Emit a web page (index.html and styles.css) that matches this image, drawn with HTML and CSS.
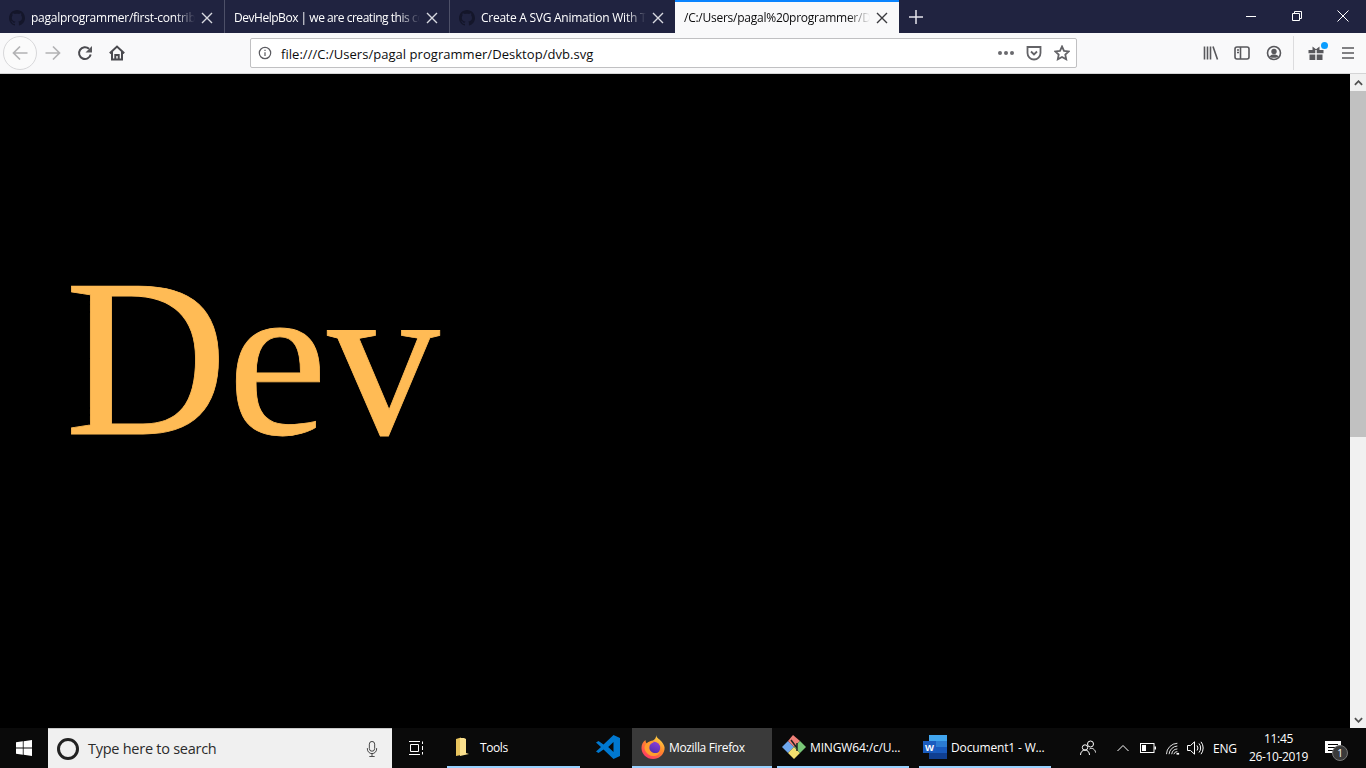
FILE: index.html
```html
<!DOCTYPE html>
<html lang="en">
<head>
<meta charset="utf-8">
<title>dvb.svg</title>
<link rel="stylesheet" href="styles.css">
</head>
<body>
<div class="browser">
  <div class="tabbar">
    <div class="tab">
      <svg class="favicon" viewBox="0 0 16 16"><path fill="#14162a" d="M8 0C3.6 0 0 3.6 0 8c0 3.5 2.3 6.5 5.500 7.600.4.100.5-.2.500-.4v-1.400c-2.200.5-2.700-1-2.700-1-.4-.9-.9-1.200-.9-1.200-.7-.5.100-.5.100-.5.800.1 1.200.8 1.200.8.700 1.200 1.900.9 2.300.7.100-.5.300-.9.500-1.100-1.800-.2-3.700-.9-3.700-4 0-.9.300-1.600.8-2.100-.1-.2-.4-1 .1-2.100 0 0 .7-.2 2.200.8.600-.2 1.300-.3 2-.3s1.400.1 2 .3c1.500-1 2.200-.8 2.200-.8.400 1.100.200 1.900.1 2.100.5.600.8 1.300.8 2.100 0 3.100-1.900 3.700-3.700 3.900.3.300.6.800.6 1.500v2.200c0 .2.100.5.500.4C13.700 14.500 16 11.500 16 8c0-4.400-3.600-8-8-8z"/></svg>
      <span class="tab-title">pagalprogrammer/first-contrib</span>
      <svg class="tab-x" viewBox="0 0 12 12"><path d="M1 1l10 10M11 1L1 11"/></svg>
    </div>
    <div class="tab no-icon">
      <span class="tab-title tight">DevHelpBox | we are creating this co</span>
      <svg class="tab-x" viewBox="0 0 12 12"><path d="M1 1l10 10M11 1L1 11"/></svg>
    </div>
    <div class="tab last">
      <svg class="favicon" viewBox="0 0 16 16"><path fill="#14162a" d="M8 0C3.6 0 0 3.6 0 8c0 3.5 2.300 6.500 5.500 7.600.4.100.5-.2.500-.4v-1.400c-2.200.5-2.700-1-2.700-1-.4-.9-.9-1.200-.9-1.200-.7-.5.100-.5.100-.5.800.1 1.200.8 1.200.8.700 1.200 1.900.9 2.300.7.100-.5.300-.9.500-1.100-1.800-.2-3.700-.9-3.700-4 0-.9.300-1.600.8-2.100-.1-.2-.4-1 .1-2.100 0 0 .7-.2 2.200.8.600-.2 1.300-.3 2-.3s1.400.1 2 .3c1.500-1 2.200-.8 2.200-.8.400 1.100.200 1.900.1 2.100.5.600.8 1.300.8 2.100 0 3.100-1.900 3.700-3.700 3.900.3.300.6.800.6 1.500v2.200c0 .2.100.5.500.4C13.700 14.500 16 11.500 16 8c0-4.400-3.600-8-8-8z"/></svg>
      <span class="tab-title">Create A SVG Animation With T</span>
      <svg class="tab-x" viewBox="0 0 12 12"><path d="M1 1l10 10M11 1L1 11"/></svg>
    </div>
    <div class="tab active no-icon">
      <span class="tab-title">/C:/Users/pagal%20programmer/De</span>
      <svg class="tab-x dark" viewBox="0 0 12 12"><path d="M1 1l10 10M11 1L1 11"/></svg>
    </div>
    <svg class="newtab" viewBox="0 0 14 14"><path d="M7 0v14M0 7h14"/></svg>
    <div class="winctl">
      <svg class="win-ic" viewBox="0 0 12 12"><path d="M1 6.500h10"/></svg>
      <svg class="win-ic" viewBox="0 0 12 12"><path d="M1.500 3.500h7v7h-7zM3.500 3.500v-2h7v7h-2"/></svg>
      <svg class="win-ic" viewBox="0 0 12 12"><path d="M.5.500l11 11M11.500.500l-11 11"/></svg>
    </div>
  </div>

  <div class="toolbar">
    <div class="backring">
      <svg class="nav-ic pale" viewBox="0 0 16 16"><path d="M15.500 8H1.500M8 1.500L1.500 8 8 14.500"/></svg>
    </div>
    <svg class="nav-ic pale fwd" viewBox="0 0 16 16"><path d="M.5 8h14M8 1.500L14.500 8 8 14.500"/></svg>
    <svg class="nav-ic reload" viewBox="0 0 16 16"><path d="M13.700 9.500A5.900 5.900 0 1 1 12 3.800"/><path class="solid" d="M15 1v6.500H8.500z"/></svg>
    <svg class="nav-ic home" viewBox="0 0 16 16"><path d="M.8 8.200L8 1.500l7.200 6.700M3 6.500V14.500h10V6.500M6.300 14.500V10h3.400v4.500"/></svg>
    <div class="urlbar">
      <svg class="info" viewBox="0 0 16 16"><circle cx="8" cy="8" r="6.500"/><path d="M8 7.200v4.300M8 4.200v1.600"/></svg>
      <span class="url">file:///C:/Users/pagal programmer/Desktop/dvb.svg</span>
      <div class="url-actions">
        <span class="dots"><i></i><i></i><i></i></span>
        <svg class="act" viewBox="0 0 16 16"><path d="M1.500 2h13v6a6.500 6.500 0 0 1-13 0zM5 6.500l3 3 3-3"/></svg>
        <svg class="act" viewBox="0 0 16 16"><path d="M8 1.500l2 4.300 4.700.6-3.400 3.200.9 4.700L8 12l-4.200 2.300.9-4.700L1.300 6.400 6 5.800z"/></svg>
      </div>
    </div>
    <div class="tools">
      <svg class="tool" viewBox="0 0 16 16"><path d="M1.500 1.500v13M4.500 1.500v13M7.500 1.500v13M10 1.500l4.500 13"/></svg>
      <svg class="tool sidebar" viewBox="0 0 16 16"><rect x="1" y="2" width="14" height="12" rx="2"/><path d="M6.500 2v12M3 5h2M3 7.500h2"/></svg>
      <svg class="tool person" viewBox="0 0 16 16"><circle cx="8" cy="8" r="6.500"/><circle class="solid" cx="8" cy="6.500" r="2.700"/><path class="solid" d="M3.500 11.500c1-1.500 2.500-2 4.500-2s3.500.5 4.500 2c-2 1.800-7 1.800-9 0z"/></svg>
      <span class="sep"></span>
      <div class="gift">
        <svg class="tool" viewBox="0 0 16 16"><path class="solid" d="M.5 5h6.800v3.200H.5zM8.700 5h6.800v3.200H8.700zM1.500 9.500h5.800V15H1.500zM8.700 9.500h5.800V15H8.700zM4.500 1.500L8 4.200l3.500-2.700V5h-7z"/></svg>
        <span class="gift-dot"></span>
      </div>
      <svg class="tool menu" viewBox="0 0 14 14"><path d="M1 2h12M1 7h12M1 12h12"/></svg>
    </div>
  </div>

  <main class="viewport">
    <div class="page">
      <div class="dev">Dev</div>
    </div>
    <div class="scrollbar">
      <svg class="sb-arrow" viewBox="0 0 10 6"><path d="M1 5l4-4 4 4"/></svg>
      <div class="sb-track"><div class="sb-thumb"></div></div>
      <svg class="sb-arrow" viewBox="0 0 10 6"><path d="M1 1l4 4 4-4"/></svg>
    </div>
  </main>

  <footer class="taskbar">
    <div class="start">
      <svg class="winlogo" viewBox="0 0 16 16"><path d="M0 2.300l6.800-1v6.300H0zM7.600 1.200L16 0v7.600H7.600zM0 8.400h6.800v6.300l-6.800-1zM7.600 8.400H16V16l-8.400-1.200z"/></svg>
    </div>
    <div class="search">
      <span class="cortana"></span>
      <span class="search-text">Type here to search</span>
      <svg class="mic" viewBox="0 0 12 18"><rect x="3" y=".5" width="6" height="11" rx="3"/><path d="M.8 8v1a5.200 5.200 0 0 0 10.400 0V8M6 14.200v3M3 17.500h6"/></svg>
    </div>
    <div class="taskview">
      <svg viewBox="0 0 16 14"><path d="M2.500 3.500h8v7h-8zM1 .5h11M1 13.500h11M14.500.5v2.500M14.500 5v4M14.500 11v2.500"/></svg>
    </div>
    <div class="app running tools-app">
      <svg class="app-ic" viewBox="0 0 16 20"><path fill="#e8c45e" d="M1 2l5-1.500V18l-5 1z"/><path fill="#fbe08d" d="M5 1h4l2 1v14l3 1-9 2z"/></svg>
      <span>Tools</span>
    </div>
    <div class="app vscode">
      <svg class="app-ic code" viewBox="0 0 24 24"><path fill="#0078d0" d="M17.500 0L24 3v18l-6.500 3L7.500 14.500 2.500 18 0 16.500 5 12 0 7.500 2.500 6l5 3.500zM17.500 7l-5.300 5 5.300 5z"/></svg>
    </div>
    <div class="app running active ff">
      <svg class="app-ic ffic" viewBox="0 0 24 24">
        <defs>
          <linearGradient id="ffo" x1="0.800" y1="0" x2="0.200" y2="1"><stop offset="0" stop-color="#ffe14a"/><stop offset="0.450" stop-color="#ff8a2a"/><stop offset="1" stop-color="#ff2f6a"/></linearGradient>
          <linearGradient id="ffp" x1="0.700" y1="0" x2="0.300" y2="1"><stop offset="0" stop-color="#8a3fd8"/><stop offset="1" stop-color="#4a2aa8"/></linearGradient>
        </defs>
        <path fill="url(#ffo)" d="M15 0c.5 3 3.500 4 5.500 6.500C23 9.500 24 12 23.500 14.500 22.500 20 18 24 12 24 5.500 24 .5 19 .5 13 .5 9.500 2 6.500 4.500 5 4.500 6.500 5 8 6 8.500 8 6 10 6 12 5.500 14 4.500 15.500 2.500 15 0z"/>
        <circle cx="13" cy="13" r="6.200" fill="url(#ffp)"/>
        <path fill="#ff9d2e" d="M5 9c2-2.500 5.500-3 8-1.500-2.500.3-4.700 2-4.700 5 0 3.500 3.500 6 7 5.500 1.800-.2 3.500-1.200 4.200-2.500-1 4-4.500 6-8 5.500C7 20.500 3 16 3.500 12 3.700 11 4.200 10 5 9z"/>
      </svg>
      <span>Mozilla Firefox</span>
    </div>
    <div class="app running git">
      <svg class="app-ic" viewBox="0 0 24 24"><path fill="#6ea6ec" d="M0 12l6-6 6 6-6 6z"/><path fill="#f08078" d="M6 6l5-6 7 6-6 6z"/><path fill="#f5e06e" d="M6 18l6-6 6 6-6 6z"/><path fill="#7ac878" d="M12 12l6-6 6 6-6 6z"/><path fill="none" stroke="#222" stroke-width="1.500" d="M9 5l6 8M15 8v8"/></svg>
      <span>MINGW64:/c/U...</span>
    </div>
    <div class="app running word">
      <svg class="app-ic" viewBox="0 0 24 24"><path fill="#2b7cd3" d="M6 0h18v24H6z"/><path fill="#41a5ee" d="M6 0h18v6H6z"/><path fill="#185abd" d="M6 12h18v6H6z"/><path fill="#103f91" d="M6 18h18v6H6z"/><path fill="#1a5cbf" d="M0 6h13v12H0z"/><text x="6.500" y="15.500" class="word-w">W</text></svg>
      <span>Document1 - W...</span>
    </div>
    <div class="tray">
      <svg class="tray-ic people" viewBox="0 0 16 16"><circle cx="10.500" cy="4" r="3"/><path d="M9.500 9c1-.8 3-.8 4 0s2 2 2 3.500"/><circle cx="5" cy="7.500" r="2.700"/><path d="M.5 15c0-3 2-5 4.500-5s4.500 2 4.500 5"/></svg>
      <svg class="tray-ic chevron" viewBox="0 0 12 8"><path d="M.5 7L6 1.500 11.500 7"/></svg>
      <svg class="tray-ic battery" viewBox="0 0 16 10"><rect x=".5" y=".5" width="13.500" height="9"/><path class="solid" d="M2 2h4v6H2zM14.500 3.500H16v3h-1.500z"/></svg>
      <svg class="tray-ic wifi" viewBox="0 0 16 14"><path d="M.5 13.500A13 13 0 0 1 13 1M3.500 13.500A10 10 0 0 1 13 4.200M6.500 13.500A7 7 0 0 1 13 7.500M9 13.500A4 4 0 0 1 13 10.500"/><path class="solid" d="M12 12h3v2h-3z"/></svg>
      <svg class="tray-ic sound" viewBox="0 0 17 14"><path d="M.5 4.500h3L7.500.8v12.400l-4-3.700h-3zM10 4.500a4 4 0 0 1 0 5M12 2.500a7 7 0 0 1 0 9M14 .8a10 10 0 0 1 0 12.400"/></svg>
      <span class="lang">ENG</span>
      <div class="clock"><span>11:45</span><span>26-10-2019</span></div>
      <div class="notif">
        <svg viewBox="0 0 16 15"><path fill="#fff" d="M0 0h16v12h-5l-3 3v-3H0z"/><path stroke="#000" stroke-width="1" d="M3 3.500h10M3 6.500h10M3 9.500h7"/></svg>
        <span class="badge">1</span>
      </div>
    </div>
  </footer>
</div>
</body>
</html>
```

FILE: styles.css
```css
* { box-sizing: border-box; }
html, body { margin: 0; height: 100%; overflow: hidden; background: #000; }
body { font-family: "Open Sans", "Noto Sans", sans-serif; }
.browser { width: 1366px; height: 768px; display: flex; flex-direction: column; }

.tabbar { height: 33px; background: #202340; display: flex; align-items: stretch; flex: none; }
.tab { width: 225px; flex: none; display: flex; align-items: center; padding: 2px 0 0 9px; border-right: 1px solid #4d5068; color: #fff; font-size: 12px; }
.tab.last { border-right: 0; }
.favicon { width: 16px; height: 16px; flex: none; margin-right: 6px; }
.tab-title { flex: 1; min-width: 0; white-space: nowrap; overflow: hidden; letter-spacing: -0.25px; -webkit-mask-image: linear-gradient(90deg, #000 88%, transparent 100%); mask-image: linear-gradient(90deg, #000 88%, transparent 100%); }
.tab-title.tight { letter-spacing: -0.47px; }
.tab-x { width: 12px; height: 12px; flex: none; margin: 0 11px 0 6px; fill: none; stroke: #d8d9e0; stroke-width: 1.400; }
.tab-x.dark { stroke: #3a3a3e; }
.tab.active { width: 224px; background: #f9f9fa; color: #0c0c0d; border-top: 2px solid #0a84ff; border-right: 0; padding-top: 0; }
.newtab { width: 14px; height: 14px; margin: 10px 0 0 10px; fill: none; stroke: #e4e4ea; stroke-width: 1.500; flex: none; }
.winctl { margin-left: auto; display: flex; align-items: center; gap: 34px; padding: 0 17px 0 0; }
.win-ic { width: 12px; height: 12px; fill: none; stroke: #fff; stroke-width: 1; margin-top: -2px; }

.toolbar { height: 41px; flex: none; background: #f9f9fa; border-bottom: 1px solid #d4d4d5; display: flex; align-items: center; padding-left: 3px; }
.backring { width: 34px; height: 34px; border-radius: 50%; border: 1px solid #d8d8da; background: #fbfbfb; display: flex; align-items: center; justify-content: center; flex: none; }
.nav-ic { width: 16px; height: 16px; fill: none; stroke: #4a4a4f; stroke-width: 2; flex: none; }
.nav-ic.pale { stroke: #b2b2b4; stroke-width: 1.700; }
.nav-ic .solid, .tool .solid, .act .solid { fill: #58585c; stroke: none; }
.fwd { margin-left: 8px; }
.reload { margin-left: 16px; }
.home { margin-left: 16px; }
.urlbar { width: 827px; height: 30px; margin-left: 125px; background: #fff; border: 1px solid #c0c0c2; border-radius: 2px; display: flex; align-items: center; padding: 0 6px 0 7px; flex: none; }
.info { width: 14px; height: 14px; fill: none; stroke: #5b5b60; stroke-width: 1.400; flex: none; }
.url { margin: 1px 0 0 9px; font-size: 13px; color: #0c0c0d; letter-spacing: 0.04px; white-space: nowrap; }
.url-actions { margin-left: auto; display: flex; align-items: center; gap: 12px; }
.dots { display: flex; gap: 2px; }
.dots i { width: 4px; height: 4px; background: #6a6a6e; border-radius: 50%; display: block; }
.act { width: 16px; height: 16px; fill: none; stroke: #636367; stroke-width: 1.800; }
.tools { display: flex; align-items: center; margin-left: 126px; }
.tool { width: 16px; height: 16px; fill: none; stroke: #58585c; stroke-width: 1.600; flex: none; }
.sidebar { margin-left: 15px; }
.person { margin-left: 16px; }
.sep { width: 1px; height: 34px; background: #dcdcde; margin: 0 14px 0 11px; }
.gift { position: relative; display: flex; }
.gift-dot { position: absolute; top: -3px; right: -4px; width: 7px; height: 7px; background: #0a9dff; border-radius: 50%; }
.menu { width: 14px; height: 14px; margin-left: 17px; }

.viewport { flex: 1; min-height: 0; display: flex; background: #000; }
.page { flex: 1; padding: 172px 0 0 65px; }
.dev { font-family: "Liberation Serif", "Times New Roman", serif; font-size: 225px; line-height: 225px; color: #ffbb55; -webkit-text-stroke: 0.8px #ffbb55; }
.scrollbar { width: 16px; flex: none; background: #f1f1f1; display: flex; flex-direction: column; align-items: center; }
.sb-arrow { width: 9px; height: 6px; margin: 6px 0 5px; fill: none; stroke: #505050; stroke-width: 2; flex: none; }
.sb-track { flex: 1; width: 100%; }
.sb-thumb { height: 346px; background: #c1c1c1; }

.taskbar { height: 40px; flex: none; background: #0a0a0a; display: flex; align-items: stretch; color: #fff; font-size: 12px; }
.start { width: 48px; display: flex; align-items: center; justify-content: center; flex: none; }
.winlogo { width: 16px; height: 16px; fill: #fff; }
.search { width: 344px; background: #f0f0f0; border-top: 1px solid #c8c8c8; display: flex; align-items: center; padding: 0 14px 0 9px; flex: none; color: #2b2b2b; font-size: 14.500px; }
.cortana { width: 22px; height: 22px; border: 3px solid #222; border-radius: 50%; flex: none; }
.search-text { margin-left: 9px; flex: 1; letter-spacing: -0.26px; }
.mic { width: 12px; height: 16px; fill: none; stroke: #333; stroke-width: 1; }
.taskview { width: 55px; padding-right: 7px; display: flex; align-items: center; justify-content: center; flex: none; }
.taskview svg { width: 16px; height: 14px; fill: none; stroke: #fff; stroke-width: 1; }
.app { display: flex; align-items: center; flex: none; border-bottom: 2px solid transparent; }
.app span { letter-spacing: -0.15px; white-space: nowrap; }
.app.running { border-bottom-color: #99d1ff; }
.app-ic { width: 24px; height: 24px; flex: none; }
.tools-app { width: 133px; padding-left: 8px; gap: 9px; }
.tools-app .app-ic { width: 16px; height: 20px; }
.tools-app span { letter-spacing: -0.4px; }
.vscode { width: 52px; padding-left: 4px; justify-content: center; }
.ff { width: 140px; padding-left: 9px; gap: 4px; }
.ff span { letter-spacing: -0.35px; }
.ff.active { background: #3a3a3a; }
.git { width: 132px; margin-left: 5px; padding-left: 5px; gap: 4px; }
.word { width: 132px; margin-left: 10px; padding-left: 4px; gap: 4px; }
.word-w { font-family: "Liberation Sans", sans-serif; font-size: 9.500px; font-weight: 700; fill: #fff; text-anchor: middle; }
.tray { margin-left: auto; display: flex; align-items: center; padding-right: 19px; }
.tray-ic { fill: none; stroke: #fff; stroke-width: 1; flex: none; }
.tray-ic .solid { fill: #fff; stroke: none; }
.people { width: 16px; height: 16px; margin-right: 21px; }
.chevron { width: 12px; height: 8px; margin-right: 11px; }
.battery { width: 16px; height: 10px; margin-right: 10px; }
.wifi { width: 14px; height: 13px; margin-right: 7px; }
.sound { width: 17px; height: 14px; margin-right: 9px; }
.lang { font-size: 12px; width: 24px; letter-spacing: -0.2px; white-space: nowrap; margin-right: 12px; }
.clock { display: flex; flex-direction: column; align-items: center; width: 59px; font-size: 12px; line-height: 18px; white-space: nowrap; letter-spacing: -0.35px; margin-right: 17px; }
.notif { width: 22px; position: relative; display: flex; }
.notif svg { width: 16px; height: 15px; }
.badge { position: absolute; left: 7px; top: 4px; width: 16px; height: 16px; border-radius: 50%; background: #3a3a3a; border: 1px solid #777; font-size: 10px; line-height: 14px; text-align: center; }
```
